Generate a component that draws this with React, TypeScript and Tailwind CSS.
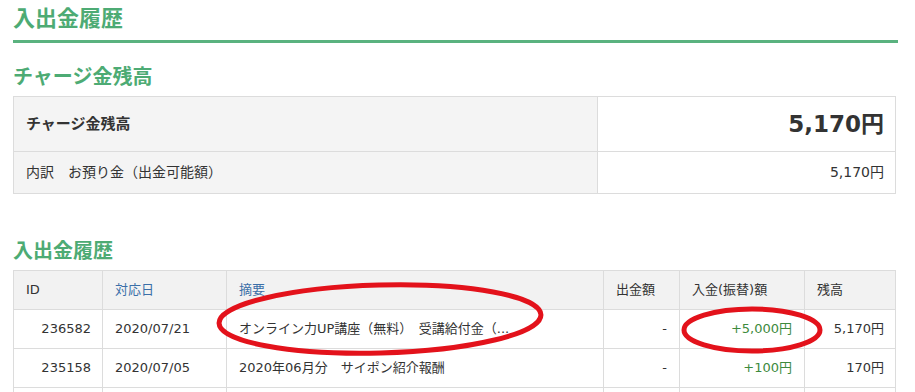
import React from "react";

const font = { fontFamily: '"DejaVu Sans", "Noto Sans CJK JP", sans-serif' };

const rows = [
  { id: "236582", date: "2020/07/21", memo: "オンライン力UP講座（無料）　受講給付金（...", out: "-", inc: "+5,000円", bal: "5,170円" },
  { id: "235158", date: "2020/07/05", memo: "2020年06月分　サイポン紹介報酬", out: "-", inc: "+100円", bal: "170円" },
];

const Annotations = () => (
  <svg className="pointer-events-none absolute left-0 top-0" width="915" height="392" viewBox="0 0 915 392">
    <ellipse cx="380" cy="319" rx="161" ry="34" fill="none" stroke="#e3121b" strokeWidth="5" transform="rotate(-1.5 380 319)" />
    <ellipse cx="752" cy="330" rx="68" ry="21" fill="none" stroke="#e3121b" strokeWidth="5" />
  </svg>
);

export default function App() {
  return (
    <div className="relative h-[392px] w-[915px] overflow-hidden bg-white text-[#333]" style={font}>
      <div className="ml-[13px] w-[885px] pt-[5px]">
        <h1 className="text-[22px] font-bold leading-[28px] text-[#4dab74]">入出金履歴</h1>
        <div className="mt-[7px] h-[3px] bg-[#5ab27f]" />

        <h2 className="mt-[21px] text-[20px] font-bold leading-[26px] text-[#4dab74]">チャージ金残高</h2>
        <table className="mt-[6px] w-[883px] border-collapse">
          <tbody>
            <tr className="h-[55px]">
              <td className="w-[584px] border border-[#dcdcdc] bg-[#f4f4f4] px-[12px] text-[15px] font-bold">チャージ金残高</td>
              <td className="border border-[#dcdcdc] px-[11px] text-right text-[23px] font-bold">5,170円</td>
            </tr>
            <tr className="h-[42px]">
              <td className="border border-[#dcdcdc] bg-[#f4f4f4] px-[12px] text-[14px]">内訳　お預り金（出金可能額）</td>
              <td className="border border-[#dcdcdc] px-[11px] text-right text-[14px]">5,170円</td>
            </tr>
          </tbody>
        </table>

        <h2 className="mt-[44px] text-[20px] font-bold leading-[26px] text-[#4dab74]">入出金履歴</h2>
        <table className="mt-[6px] w-[883px] table-fixed border-collapse text-[13px]">
          <thead>
            <tr className="h-[39px] bg-[#f2f2f2] text-left">
              <th className="w-[89px] border border-[#dcdcdc] px-[12px] font-normal">ID</th>
              <th className="w-[124px] border border-[#dcdcdc] px-[12px] font-normal text-[#3b6fa8]">対応日</th>
              <th className="w-[377px] border border-[#dcdcdc] px-[12px] font-normal text-[#3b6fa8]">摘要</th>
              <th className="w-[76px] border border-[#dcdcdc] px-[12px] font-normal">出金額</th>
              <th className="w-[125px] border border-[#dcdcdc] px-[12px] font-normal">入金(振替)額</th>
              <th className="border border-[#dcdcdc] px-[12px] font-normal">残高</th>
            </tr>
          </thead>
          <tbody>
            {rows.map((r) => (
              <tr key={r.id} className="h-[39px]">
                <td className="border border-[#dcdcdc] px-[11px] text-right">{r.id}</td>
                <td className="border border-[#dcdcdc] px-[12px]">{r.date}</td>
                <td className="whitespace-nowrap border border-[#dcdcdc] px-[12px]">{r.memo}</td>
                <td className="border border-[#dcdcdc] px-[12px] text-right">{r.out}</td>
                <td className="border border-[#dcdcdc] px-[12px] text-right text-[#3d8a3d]">{r.inc}</td>
                <td className="border border-[#dcdcdc] px-[11px] text-right">{r.bal}</td>
              </tr>
            ))}
            <tr className="h-[39px]">
              <td className="border border-[#dcdcdc]" />
              <td className="border border-[#dcdcdc]" />
              <td className="border border-[#dcdcdc]" />
              <td className="border border-[#dcdcdc]" />
              <td className="border border-[#dcdcdc]" />
              <td className="border border-[#dcdcdc]" />
            </tr>
          </tbody>
        </table>
      </div>
      <Annotations />
    </div>
  );
}
